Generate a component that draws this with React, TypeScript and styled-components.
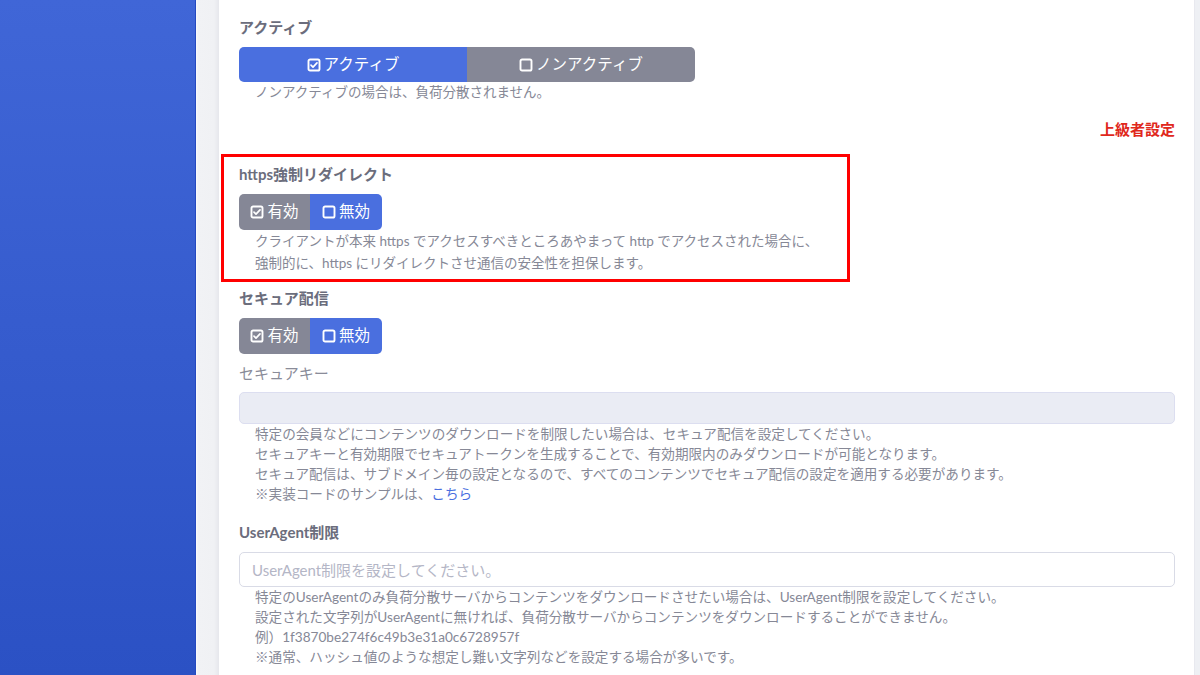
import React from "react";
import styled, { createGlobalStyle } from "styled-components";

const Global = createGlobalStyle`
  html, body { margin: 0; padding: 0; }
  body {
    font-family: "Lato", "Noto Sans CJK JP", sans-serif;
    background: #f0f1f5;
    overflow: hidden;
  }
`;

const Shell = styled.div`
  display: flex;
  width: 1200px;
  height: 675px;
  overflow: hidden;
`;

const Sidebar = styled.aside`
  width: 195px;
  flex: 0 0 195px;
  background: linear-gradient(180deg, #4066d7 0%, #2b51c4 100%);
  border-right: 1px solid #2449c0;
`;

const Gutter = styled.div`
  flex: 1;
  display: flex;
  padding-left: 23px;
  padding-right: 5px;
  background: linear-gradient(90deg, #fbfbfd 0px, #f1f2f5 2px, #f0f1f4 18px, #e6e7ec 23px);
  background-repeat: no-repeat;
  background-size: 23px 100%;
  background-color: #eef0f4;
`;

const Panel = styled.main`
  flex: 1;
  background: #ffffff;
  border-right: 1px solid #e8e9ef;
  padding: 18px 19px 0 20px;
  display: flex;
  flex-direction: column;
`;

const Label = styled.div<{ $plain?: boolean }>`
  font-size: 15px;
  line-height: 18px;
  font-weight: ${(p) => (p.$plain ? 400 : 700)};
  color: ${(p) => (p.$plain ? "#8a8c99" : "#6b6d7c")};
  margin-bottom: ${(p) => (p.$plain ? 10 : 11)}px;
`;

const Group = styled.section<{ $gap?: number }>`
  display: flex;
  flex-direction: column;
  margin-top: ${(p) => p.$gap ?? 0}px;
`;

const Highlight = styled.section`
  display: flex;
  flex-direction: column;
  width: 629px;
  box-sizing: border-box;
  margin-left: -18px;
  margin-top: 16px;
  border: 3px solid #ff0000;
  padding: 8px 15px 5px 15px;
`;

const ToggleGroup = styled.div<{ $h: number }>`
  display: flex;
  height: ${(p) => p.$h}px;
  border-radius: 5px;
  overflow: hidden;
  align-self: flex-start;
`;

const ToggleBtn = styled.button<{ $on: boolean; $w?: number }>`
  display: flex;
  align-items: center;
  justify-content: center;
  gap: 3px;
  border: none;
  margin: 0;
  padding: 0 10px;
  ${(p) => (p.$w ? `width: ${p.$w}px;` : "")}
  background: ${(p) => (p.$on ? "#4a6fdf" : "#858796")};
  color: #ffffff;
  font-family: inherit;
  font-size: 15.5px;
  line-height: 1;
  cursor: pointer;
`;

const Help = styled.div<{ $lh?: number; $fs?: number }>`
  padding-left: 16px;
  font-size: ${(p) => p.$fs ?? 13.5}px;
  line-height: ${(p) => p.$lh ?? 20}px;
  color: #868896;
`;

const Link = styled.a`
  color: #4a6fdf;
  text-decoration: none;
`;

const Advanced = styled.div`
  align-self: flex-end;
  margin-top: 18px;
  color: #e0281c;
  font-size: 15px;
  line-height: 18px;
  font-weight: 700;
`;

const Input = styled.input<{ $h: number; $disabled?: boolean }>`
  box-sizing: border-box;
  width: 100%;
  height: ${(p) => p.$h}px;
  border: 1px solid ${(p) => (p.$disabled ? "#dcdef0" : "#d9dbe6")};
  border-radius: 5px;
  background: ${(p) => (p.$disabled ? "#eaecf4" : "#ffffff")};
  padding: 0 12px;
  font-family: inherit;
  font-size: 15px;
  color: #6e707e;
  outline: none;
  &::placeholder {
    color: #b4b6c6;
  }
`;

const CheckIcon = ({ checked }: { checked: boolean }) => (
  <svg width="14" height="14" viewBox="0 0 14 14" fill="none">
    <rect x="1.5" y="1.5" width="11" height="11" rx="1.6" stroke="#fff" strokeWidth="1.9" />
    {checked && (
      <path d="M4 7.2 L6 9.1 L10 4.9" stroke="#fff" strokeWidth="1.7" strokeLinecap="round" strokeLinejoin="round" />
    )}
  </svg>
);

const Toggle = ({
  h,
  items,
}: {
  h: number;
  items: { label: string; on: boolean; checked: boolean; w?: number }[];
}) => (
  <ToggleGroup $h={h}>
    {items.map((it) => (
      <ToggleBtn key={it.label} $on={it.on} $w={it.w}>
        <CheckIcon checked={it.checked} />
        {it.label}
      </ToggleBtn>
    ))}
  </ToggleGroup>
);

export default function App() {
  return (
    <>
      <Global />
      <Shell>
        <Sidebar />
        <Gutter>
          <Panel>
            <Group>
              <Label>アクティブ</Label>
              <Toggle
                h={35}
                items={[
                  { label: "アクティブ", on: true, checked: true, w: 228 },
                  { label: "ノンアクティブ", on: false, checked: false, w: 228 },
                ]}
              />
              <Help>ノンアクティブの場合は、負荷分散されません。</Help>
            </Group>

            <Advanced>上級者設定</Advanced>

            <Highlight>
              <Label>https強制リダイレクト</Label>
              <Toggle
                h={36}
                items={[
                  { label: "有効", on: false, checked: true, w: 71 },
                  { label: "無効", on: true, checked: false, w: 72 },
                ]}
              />
              <Help $lh={22}>
                クライアントが本来 https でアクセスすべきところあやまって http でアクセスされた場合に、
                <br />
                強制的に、https にリダイレクトさせ通信の安全性を担保します。
              </Help>
            </Highlight>

            <Group $gap={7}>
              <Label>セキュア配信</Label>
              <Toggle
                h={36}
                items={[
                  { label: "有効", on: false, checked: true, w: 71 },
                  { label: "無効", on: true, checked: false, w: 72 },
                ]}
              />
            </Group>

            <Group $gap={10}>
              <Label $plain>セキュアキー</Label>
              <Input $h={32} $disabled disabled />
              <Help $fs={13.6}>
                特定の会員などにコンテンツのダウンロードを制限したい場合は、セキュア配信を設定してください。
                <br />
                セキュアキーと有効期限でセキュアトークンを生成することで、有効期限内のみダウンロードが可能となります。
                <br />
                セキュア配信は、サブドメイン毎の設定となるので、すべてのコンテンツでセキュア配信の設定を適用する必要があります。
                <br />
                ※実装コードのサンプルは、<Link href="#">こちら</Link>
              </Help>
            </Group>

            <Group $gap={19}>
              <Label>UserAgent制限</Label>
              <Input $h={35} placeholder="UserAgent制限を設定してください。" />
              <Help $fs={13.6}>
                特定のUserAgentのみ負荷分散サーバからコンテンツをダウンロードさせたい場合は、UserAgent制限を設定してください。
                <br />
                設定された文字列がUserAgentに無ければ、負荷分散サーバからコンテンツをダウンロードすることができません。
                <br />
                例）1f3870be274f6c49b3e31a0c6728957f
                <br />
                ※通常、ハッシュ値のような想定し難い文字列などを設定する場合が多いです。
              </Help>
            </Group>
          </Panel>
        </Gutter>
      </Shell>
    </>
  );
}
